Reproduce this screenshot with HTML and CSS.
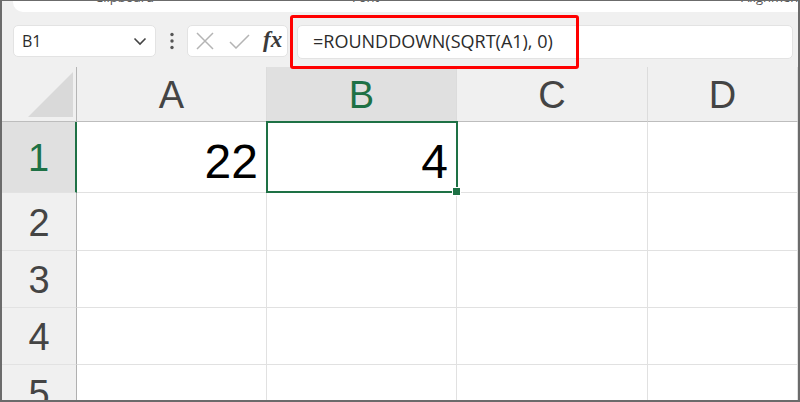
FILE: index.html
```html
<!DOCTYPE html>
<html lang="en">
<head>
    <meta charset="UTF-8">
    <title>ROUNDDOWN SQRT</title>
    <link rel="stylesheet" href="styles.css">
</head>
<body>
    <div class="window">
        <!-- bottom edge of the ribbon, labels cut off -->
        <div class="ribbon">
            <span class="rlabel lbl-clip">Clipboard</span>
            <svg class="launcher l1" width="10" height="7" viewBox="0 0 10 7"><path d="M1 0v4h8M6 1l3 3" fill="none" stroke="#666" stroke-width="1.2"/></svg>
            <span class="rlabel lbl-font">Font</span>
            <svg class="launcher l2" width="10" height="7" viewBox="0 0 10 7"><path d="M1 0v4h8M6 1l3 3" fill="none" stroke="#666" stroke-width="1.2"/></svg>
            <span class="rlabel lbl-align">Alignment</span>
        </div>

        <!-- formula bar -->
        <div class="fbar">
            <div class="namebox">
                <span>B1</span>
                <svg width="14" height="9" viewBox="0 0 14 9"><polyline points="1.5,1.5 7,7 12.5,1.5" fill="none" stroke="#444" stroke-width="1.6"/></svg>
            </div>
            <div class="grip">
                <svg width="4" height="18" viewBox="0 0 4 18"><circle cx="2" cy="2.5" r="1.7" fill="#555"/><circle cx="2" cy="9" r="1.7" fill="#555"/><circle cx="2" cy="15.5" r="1.7" fill="#555"/></svg>
            </div>
            <div class="fbtns">
                <svg width="18" height="18" viewBox="0 0 18 18"><path d="M1 1L17 17M17 1L1 17" stroke="#b4b4b4" stroke-width="1.5"/></svg>
                <svg width="21" height="15" viewBox="0 0 21 15"><polyline points="1,8 7,14 20,1" fill="none" stroke="#b4b4b4" stroke-width="1.5"/></svg>
                <span class="fx">fx</span>
            </div>
            <div class="finput">=ROUNDDOWN(SQRT(A1), 0)</div>
        </div>

        <!-- sheet -->
        <div class="grid">
            <div class="corner"><i></i></div>
            <div class="colh">A</div>
            <div class="colh on">B</div>
            <div class="colh">C</div>
            <div class="colh">D</div>

            <div class="rowh on">1</div>
            <div class="cell">22</div>
            <div class="cell sel">4</div>
            <div class="cell"></div>
            <div class="cell"></div>

            <div class="rowh">2</div>
            <div class="cell"></div>
            <div class="cell"></div>
            <div class="cell"></div>
            <div class="cell"></div>

            <div class="rowh">3</div>
            <div class="cell"></div>
            <div class="cell"></div>
            <div class="cell"></div>
            <div class="cell"></div>

            <div class="rowh">4</div>
            <div class="cell"></div>
            <div class="cell"></div>
            <div class="cell"></div>
            <div class="cell"></div>

            <div class="rowh">5</div>
            <div class="cell"></div>
            <div class="cell"></div>
            <div class="cell"></div>
            <div class="cell"></div>
        </div>

        <!-- red highlight round the formula -->
        <div class="callout"></div>
    </div>
</body>
</html>
```

FILE: styles.css
```css
*{
    margin: 0;
    padding: 0;
    box-sizing: border-box;
}
body{
    width: 800px;
    height: 402px;
    overflow: hidden;
    background: #fff;
    font-family: "Liberation Sans", Arial, sans-serif;
}
.window{
    position: relative;
    width: 800px;
    height: 402px;
    overflow: hidden;
    background: #f0f0f0;
    border-top: 1px solid #6b6b6b;
    border-left: 2px solid #6b6b6b;
    border-right: 2px solid #6b6b6b;
    border-bottom: 2px solid #6b6b6b;
}

/* ribbon strip */
.ribbon{
    height: 11px;
    margin-left: 11px;
    background: #fff;
    border-bottom-left-radius: 10px;
    display: flex;
    align-items: flex-start;
    overflow: hidden;
    white-space: nowrap;
}
.rlabel{
    display: block;
    font-family: "Open Sans", sans-serif;
    font-size: 13px;
    line-height: 13px;
    color: #555;
    margin-top: -10px;
}
.lbl-clip{ margin-left: 82px; width: 70px; }
.launcher{ display: block; margin-top: -1px; }
.l1{ margin-left: 93px; }
.lbl-font{ margin-left: 105px; width: 30px; }
.l2{ margin-left: 230px; }
.lbl-align{ margin-left: 132px; }

/* formula bar */
.fbar{
    height: 55px;
    display: flex;
    align-items: flex-start;
    padding: 13px 0 0 11px;
}
.namebox{
    width: 143px;
    height: 32px;
    background: #fff;
    border: 1px solid #e3e3e3;
    border-radius: 5px;
    display: flex;
    align-items: center;
    justify-content: space-between;
    padding: 0 8px 0 8px;
    font-family: "Open Sans", sans-serif;
    font-size: 16px;
    color: #2b2b2b;
}
.grip{
    width: 31px;
    height: 32px;
    display: flex;
    align-items: center;
    justify-content: center;
}
.fbtns{
    width: 101px;
    height: 32px;
    background: #fff;
    border: 1px solid #e3e3e3;
    border-radius: 5px;
    display: flex;
    align-items: center;
    padding-left: 8px;
    gap: 15px;
}
.fx{
    font-family: "Liberation Serif", serif;
    font-style: italic;
    font-weight: bold;
    font-size: 23px;
    color: #3a3a3a;
    margin-left: -2px;
    margin-top: -3px;
}
.finput{
    width: 496px;
    height: 34px;
    margin-left: 9px;
    background: #fff;
    border: 1px solid #e3e3e3;
    border-radius: 5px;
    padding-left: 15px;
    font-family: "Open Sans", sans-serif;
    font-size: 18px;
    line-height: 31px;
    color: #2b2b2b;
    white-space: nowrap;
}

/* sheet grid */
.grid{
    display: grid;
    grid-template-columns: 75px 190px 190px 191px 1fr;
    grid-template-rows: 55px 71px 58px 57px 57px 57px;
}
.corner{
    background: #f0f0f0;
    border-right: 1px solid #b5b5b5;
    border-bottom: 1px solid #bdbdbd;
    display: flex;
    align-items: flex-end;
    justify-content: flex-end;
    padding: 0 3px 4px 0;
}
.corner i{
    display: block;
    width: 45px;
    height: 45px;
    background: #d9d9d9;
    clip-path: polygon(100% 0, 100% 100%, 0 100%);
}
.colh{
    background: #f0f0f0;
    border-right: 1px solid #dcdcdc;
    border-bottom: 1px solid #bdbdbd;
    display: flex;
    align-items: center;
    justify-content: center;
    padding-top: 3px;
    font-size: 38px;
    color: #444;
}
.rowh{
    background: #f0f0f0;
    border-right: 1px solid #b0b0b0;
    border-bottom: 1px solid #e2e2e2;
    display: flex;
    align-items: center;
    justify-content: center;
    padding-top: 3px;
    font-size: 38px;
    color: #444;
}
.colh.on{
    background: #e0e0e0;
    color: #1e7145;
}
.rowh.on{
    background: #e0e0e0;
    color: #1e7145;
    border-right: 2px solid #1e7145;
}
.cell{
    background: #fff;
    border-right: 1px solid #e1e1e1;
    border-bottom: 1px solid #e1e1e1;
    display: flex;
    align-items: center;
    justify-content: flex-end;
    padding: 8px 8px 0 0;
    font-size: 48px;
    color: #000;
}
.cell.sel{
    position: relative;
}
/* selection frame and fill handle */
.cell.sel::before{
    content: "";
    position: absolute;
    left: -1px;
    top: -1px;
    right: -2px;
    bottom: -1px;
    border: 2px solid #1e7145;
}
.cell.sel::after{
    content: "";
    position: absolute;
    right: -5px;
    bottom: -4px;
    width: 7px;
    height: 7px;
    background: #1e7145;
    border: 1px solid #fff;
}

.callout{
    position: absolute;
    left: 288px;
    top: 14px;
    width: 289px;
    height: 54px;
    border: 3px solid #ff0000;
    border-radius: 3px;
}
```
